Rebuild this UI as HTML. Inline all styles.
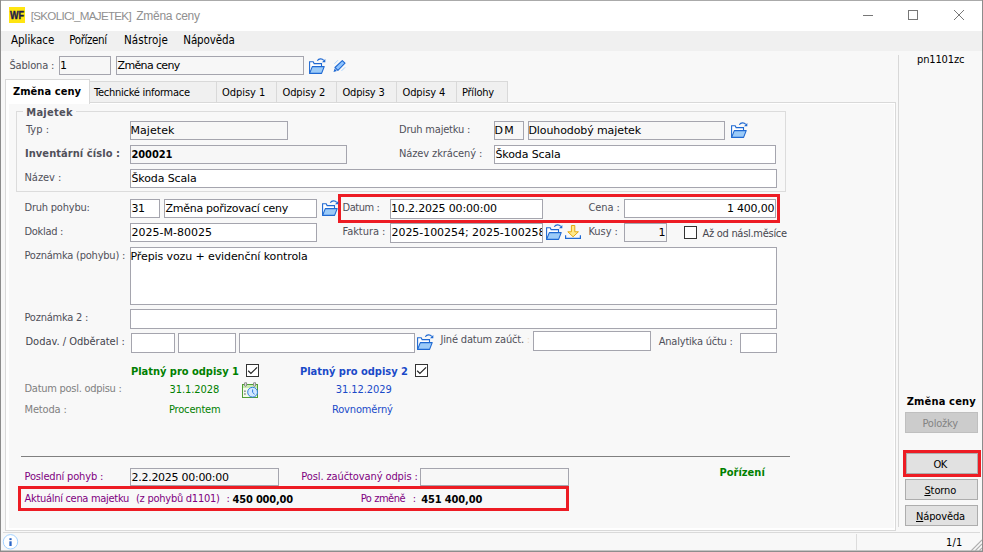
<!DOCTYPE html><html lang="cs"><head><meta charset="utf-8"><title>[SKOLICI_MAJETEK] Změna ceny</title>
<style>html,body{margin:0;padding:0}body{width:983px;height:552px;overflow:hidden;background:#f8f8f8;position:relative}.t{position:absolute;white-space:pre;line-height:20px;height:20px}</style></head><body>
<div style="position:absolute;left:0px;top:0px;width:983px;height:552px;background:#8c8c8c;"></div>
<div style="position:absolute;left:1px;top:1px;width:981px;height:549px;background:#f8f8f8;"></div>
<div style="position:absolute;left:1px;top:550px;width:981px;height:1px;background:#c4c4c4;"></div>
<div style="position:absolute;left:1px;top:0px;width:981px;height:1px;background:#aaaaaa;"></div>
<div style="position:absolute;left:1px;top:1px;width:981px;height:30px;background:#ffffff;"></div>
<div style="position:absolute;left:1px;top:31px;width:981px;height:20px;background:#f0f0f0;"></div>
<div style="position:absolute;left:9px;top:7px;width:16px;height:16px;background:#ffe512"></div>
<span style="position:absolute;left:9.8px;top:5px;line-height:20px;font:bold 10.5px/20px 'Liberation Sans',sans-serif;color:#1c1a4a;transform:scaleX(.86);transform-origin:0 0;-webkit-text-stroke:.4px #1c1a4a">WF</span>
<svg style="position:absolute;left:855px;top:1px" width="126" height="30" viewBox="0 0 126 30" fill="none" stroke="#777" stroke-width="1"><path d="M8 14.5h10"/><rect x="53.5" y="9.5" width="9" height="9"/><path d="M99 9l10 10M109 9l-10 10"/></svg>
<div style="position:absolute;left:59px;top:56px;width:50px;height:17px;background:#f7f7f7;border:1px solid #a5a5ae;"></div>
<div style="position:absolute;left:116px;top:56px;width:186px;height:17px;background:#f7f7f7;border:1px solid #a5a5ae;"></div>
<div style="position:absolute;left:898px;top:55px;width:1px;height:472px;background:#d8d8d8;"></div>
<div style="position:absolute;left:905px;top:412px;width:71px;height:19px;background:#cccccc;border:1px solid #bfbfbf;"></div>
<div style="position:absolute;left:903px;top:450px;width:72px;height:21px;background:transparent;border:3px solid #ed1c24;"></div>
<div style="position:absolute;left:906px;top:453px;width:70px;height:19px;background:#e1e1e1;border:1px solid #adadad;"></div>
<div style="position:absolute;left:905px;top:479px;width:71px;height:19px;background:#e1e1e1;border:1px solid #adadad;"></div>
<div style="position:absolute;left:905px;top:505px;width:71px;height:19px;background:#e1e1e1;border:1px solid #adadad;"></div>
<div style="position:absolute;left:5px;top:102px;width:889px;height:427px;background:#ffffff;border:1px solid #d9d9d9;"></div>
<div style="position:absolute;left:9px;top:104px;width:885px;height:424px;background:#f8f8f8;"></div>
<div style="position:absolute;left:89px;top:81px;width:419px;height:21px;background:#f0f0f0;border-top:1px solid #d9d9d9;box-sizing:border-box"></div>
<div style="position:absolute;left:216px;top:81px;width:1px;height:21px;background:#d9d9d9;"></div>
<div style="position:absolute;left:276px;top:81px;width:1px;height:21px;background:#d9d9d9;"></div>
<div style="position:absolute;left:336px;top:81px;width:1px;height:21px;background:#d9d9d9;"></div>
<div style="position:absolute;left:396px;top:81px;width:1px;height:21px;background:#d9d9d9;"></div>
<div style="position:absolute;left:456px;top:81px;width:1px;height:21px;background:#d9d9d9;"></div>
<div style="position:absolute;left:507px;top:81px;width:1px;height:21px;background:#d9d9d9;"></div>
<div style="position:absolute;left:5px;top:79px;width:83px;height:24px;background:#ffffff;border:1px solid #d9d9d9;border-bottom:none"></div>
<div style="position:absolute;left:16px;top:111px;width:768px;height:79px;background:transparent;border:1px solid #dcdcdc;"></div>
<div style="position:absolute;left:23px;top:105px;width:53px;height:14px;background:#f8f8f8;"></div>
<div style="position:absolute;left:130px;top:121px;width:156px;height:17px;background:#f7f7f7;border:1px solid #a5a5ae;"></div>
<div style="position:absolute;left:494px;top:121px;width:28px;height:17px;background:#f7f7f7;border:1px solid #a5a5ae;"></div>
<div style="position:absolute;left:528px;top:121px;width:195px;height:17px;background:#f7f7f7;border:1px solid #a5a5ae;"></div>
<div style="position:absolute;left:130px;top:145px;width:215px;height:17px;background:#f7f7f7;border:1px solid #a5a5ae;"></div>
<div style="position:absolute;left:494px;top:145px;width:280px;height:17px;background:#fff;border:1px solid #a5a5ae;"></div>
<div style="position:absolute;left:130px;top:169px;width:645px;height:17px;background:#fff;border:1px solid #a5a5ae;"></div>
<div style="position:absolute;left:130px;top:199px;width:28px;height:17px;background:#fff;border:1px solid #a5a5ae;"></div>
<div style="position:absolute;left:164px;top:199px;width:151px;height:17px;background:#fff;border:1px solid #a5a5ae;"></div>
<div style="position:absolute;left:390px;top:199px;width:151px;height:18px;background:#fff;border:1px solid #a5a5ae;"></div>
<div style="position:absolute;left:624px;top:199px;width:150px;height:17px;background:#fff;border:1px solid #a5a5ae;"></div>
<div style="position:absolute;left:338px;top:194px;width:436px;height:23px;background:transparent;border:3px solid #ed1c24;"></div>
<div style="position:absolute;left:130px;top:223px;width:185px;height:17px;background:#fff;border:1px solid #a5a5ae;"></div>
<div style="position:absolute;left:390px;top:223px;width:151px;height:18px;background:#fff;border:1px solid #a5a5ae;"></div>
<div style="position:absolute;left:624px;top:223px;width:41px;height:17px;background:#f7f7f7;border:1px solid #a5a5ae;"></div>
<div style="position:absolute;left:684px;top:226px;width:11px;height:11px;background:#fff;border:1px solid #333;"></div>
<div style="position:absolute;left:130px;top:247px;width:645px;height:56px;background:#fff;border:1px solid #a5a5ae;"></div>
<div style="position:absolute;left:130px;top:309px;width:645px;height:18px;background:#fff;border:1px solid #a5a5ae;"></div>
<div style="position:absolute;left:131px;top:333px;width:42px;height:18px;background:#fff;border:1px solid #a5a5ae;"></div>
<div style="position:absolute;left:178px;top:333px;width:56px;height:18px;background:#fff;border:1px solid #a5a5ae;"></div>
<div style="position:absolute;left:239px;top:333px;width:174px;height:18px;background:#fff;border:1px solid #a5a5ae;"></div>
<div style="position:absolute;left:533px;top:331px;width:116px;height:18px;background:#fff;border:1px solid #a5a5ae;"></div>
<div style="position:absolute;left:740px;top:333px;width:35px;height:18px;background:#fff;border:1px solid #a5a5ae;"></div>
<svg style="position:absolute;left:246px;top:364px" width="13" height="13" viewBox="0 0 13 13"><rect x=".5" y=".5" width="12" height="12" fill="#fff" stroke="#333"/><path d="M2.2 6.8l2.7 2.6 6.2-6" fill="none" stroke="#222" stroke-width="1.2"/></svg>
<svg style="position:absolute;left:415px;top:364px" width="13" height="13" viewBox="0 0 13 13"><rect x=".5" y=".5" width="12" height="12" fill="#fff" stroke="#333"/><path d="M2.2 6.8l2.7 2.6 6.2-6" fill="none" stroke="#222" stroke-width="1.2"/></svg>
<div style="position:absolute;left:21px;top:456px;width:769px;height:1px;background:#808080;"></div>
<div style="position:absolute;left:130px;top:468px;width:147px;height:16px;background:#f7f7f7;border:1px solid #a5a5ae;"></div>
<div style="position:absolute;left:420px;top:468px;width:147px;height:16px;background:#f7f7f7;border:1px solid #a5a5ae;"></div>
<div style="position:absolute;left:18px;top:486px;width:545px;height:19px;background:transparent;border:3px solid #ed1c24;"></div>
<div style="position:absolute;left:3px;top:532px;width:977px;height:1px;background:#dadada;"></div>
<div style="position:absolute;left:856px;top:534px;width:1px;height:16px;background:#dcdcdc;"></div>
<svg style="position:absolute;left:2px;top:533px" width="17" height="17" viewBox="0 0 17 17"><circle cx="8.5" cy="8.8" r="7.2" fill="#fff" stroke="#a3d2ff" stroke-width="1"/><path d="M8.5 8.3v4.7" stroke="#2a66c8" stroke-width="2.3"/><rect x="7.4" y="5.2" width="2.2" height="1.9" fill="#2a66c8"/></svg>
<svg style="position:absolute;left:969px;top:538px" width="13" height="13" viewBox="0 0 13 13" stroke="#b0b0b0" stroke-width="1.2"><path d="M13 2L2 13M13 6L6 13M13 10l-3 3"/></svg>
<svg style="position:absolute;left:309px;top:58px" width="17" height="16" viewBox="0 0 17 16"><path d="M0.6 15.4V3.7h3.6l0.9 1.9h7.4v2.9" fill="#fff" stroke="#1f69d2" stroke-width="1.1"/><path d="M0.6 15.4L3.3 8.6h11.9l-2.6 6.8z" fill="#9ccbf8" stroke="#1f69d2" stroke-width="1.1" stroke-linejoin="round"/><path d="M8.3 2.7C9.8 0.4 13 0.2 14.8 2.3" fill="none" stroke="#1f69d2" stroke-width="1.1"/><path d="M16.3 0.9v3.4h-3.3z" fill="#1f69d2"/></svg>
<svg style="position:absolute;left:731px;top:122px" width="17" height="16" viewBox="0 0 17 16"><path d="M0.6 15.4V3.7h3.6l0.9 1.9h7.4v2.9" fill="#fff" stroke="#1f69d2" stroke-width="1.1"/><path d="M0.6 15.4L3.3 8.6h11.9l-2.6 6.8z" fill="#9ccbf8" stroke="#1f69d2" stroke-width="1.1" stroke-linejoin="round"/><path d="M8.3 2.7C9.8 0.4 13 0.2 14.8 2.3" fill="none" stroke="#1f69d2" stroke-width="1.1"/><path d="M16.3 0.9v3.4h-3.3z" fill="#1f69d2"/></svg>
<svg style="position:absolute;left:322px;top:200px" width="17" height="16" viewBox="0 0 17 16"><path d="M0.6 15.4V3.7h3.6l0.9 1.9h7.4v2.9" fill="#fff" stroke="#1f69d2" stroke-width="1.1"/><path d="M0.6 15.4L3.3 8.6h11.9l-2.6 6.8z" fill="#9ccbf8" stroke="#1f69d2" stroke-width="1.1" stroke-linejoin="round"/><path d="M8.3 2.7C9.8 0.4 13 0.2 14.8 2.3" fill="none" stroke="#1f69d2" stroke-width="1.1"/><path d="M16.3 0.9v3.4h-3.3z" fill="#1f69d2"/></svg>
<svg style="position:absolute;left:546px;top:224px" width="17" height="16" viewBox="0 0 17 16"><path d="M0.6 15.4V3.7h3.6l0.9 1.9h7.4v2.9" fill="#fff" stroke="#1f69d2" stroke-width="1.1"/><path d="M0.6 15.4L3.3 8.6h11.9l-2.6 6.8z" fill="#9ccbf8" stroke="#1f69d2" stroke-width="1.1" stroke-linejoin="round"/><path d="M8.3 2.7C9.8 0.4 13 0.2 14.8 2.3" fill="none" stroke="#1f69d2" stroke-width="1.1"/><path d="M16.3 0.9v3.4h-3.3z" fill="#1f69d2"/></svg>
<svg style="position:absolute;left:417px;top:334px" width="17" height="16" viewBox="0 0 17 16"><path d="M0.6 15.4V3.7h3.6l0.9 1.9h7.4v2.9" fill="#fff" stroke="#1f69d2" stroke-width="1.1"/><path d="M0.6 15.4L3.3 8.6h11.9l-2.6 6.8z" fill="#9ccbf8" stroke="#1f69d2" stroke-width="1.1" stroke-linejoin="round"/><path d="M8.3 2.7C9.8 0.4 13 0.2 14.8 2.3" fill="none" stroke="#1f69d2" stroke-width="1.1"/><path d="M16.3 0.9v3.4h-3.3z" fill="#1f69d2"/></svg>
<svg style="position:absolute;left:333px;top:60px" width="13" height="13" viewBox="0 0 13 13"><path d="M9.3 0.6L12 3.2 4.9 10.3 2 7.5z" fill="#8fc4ff" stroke="#1f69d2" stroke-width="1.1" stroke-linejoin="round"/><path d="M1.6 8.6l2.3 2.3-3.4 1.2z" fill="#1f69d2"/><path d="M1.4 3.8L5 0.2M8.5 10.9l3.6-3.6" stroke="#9fd0ff" stroke-width="0.9" fill="none"/></svg>
<svg style="position:absolute;left:565px;top:225px" width="16" height="15" viewBox="0 0 16 15"><path d="M6.4 0.5h3.4v6.3h3.6L8.1 11.8 2.8 6.8h3.6z" fill="#ffe98a" stroke="#e3aa10" stroke-width="1" stroke-linejoin="round"/><path d="M0.6 10.2v3.2h14.8v-3.2" fill="none" stroke="#1f69d2" stroke-width="1.2"/></svg>
<svg style="position:absolute;left:242px;top:382px" width="17" height="17" viewBox="0 0 17 17"><rect x="0.5" y="2.5" width="15" height="13" fill="#f2fbea" stroke="#4f9e35"/><rect x="1" y="3" width="14" height="3" fill="#c9ebb2"/><rect x="2" y="8.4" width="1.8" height="1.6" fill="#999"/><rect x="2" y="11.2" width="1.8" height="1.6" fill="#999"/><ellipse cx="3.6" cy="2.3" rx="1.1" ry="2.2" fill="#ddd" stroke="#808080" stroke-width="0.9"/><ellipse cx="12.6" cy="2.3" rx="1.1" ry="2.2" fill="#ddd" stroke="#808080" stroke-width="0.9"/><circle cx="10.6" cy="10.2" r="4.9" fill="#d2e8ff" stroke="#2f7de1" stroke-width="1"/><path d="M10.6 7.4v3l2 1.9" fill="none" stroke="#2f7de1" stroke-width="1"/></svg>
<span class="t" style="left:30.80px;top:9.00px;font:normal 11.6px 'Liberation Sans',sans-serif;color:#909090;letter-spacing:-0.705px;">[SKOLICI_MAJETEK]</span>
<span class="t" style="left:136.20px;top:9.00px;font:normal 12px 'Liberation Sans',sans-serif;color:#909090;letter-spacing:-0.248px;">Změna ceny</span>
<span class="t" style="left:11.00px;top:33.00px;font:normal 11.5px 'DejaVu Sans Condensed','Liberation Sans',sans-serif;color:#000;letter-spacing:-0.03px;">Aplikace</span>
<span class="t" style="left:69.25px;top:33.00px;font:normal 11.5px 'DejaVu Sans Condensed','Liberation Sans',sans-serif;color:#000;letter-spacing:-0.377px;">Pořízení</span>
<span class="t" style="left:124.00px;top:33.00px;font:normal 11.5px 'DejaVu Sans Condensed','Liberation Sans',sans-serif;color:#000;letter-spacing:0.111px;">Nástroje</span>
<span class="t" style="left:183.25px;top:33.00px;font:normal 11.5px 'DejaVu Sans Condensed','Liberation Sans',sans-serif;color:#000;letter-spacing:-0.112px;">Nápověda</span>
<span class="t" style="left:9.50px;top:59.00px;font:normal 11px 'DejaVu Sans Condensed','Liberation Sans',sans-serif;color:#50505a;letter-spacing:-0.177px;">Šablona :</span>
<span class="t" style="left:60.00px;top:59.00px;font:normal 11px 'DejaVu Sans','Liberation Sans',sans-serif;color:#000;">1</span>
<span class="t" style="left:117.50px;top:59.00px;font:normal 11px 'DejaVu Sans','Liberation Sans',sans-serif;color:#000;letter-spacing:-0.641px;">Změna ceny</span>
<span class="t" style="left:917.00px;top:53.00px;font:normal 11px 'DejaVu Sans Condensed','Liberation Sans',sans-serif;color:#000;letter-spacing:-0.133px;">pn1101zc</span>
<span class="t" style="left:906.70px;top:395.00px;font:bold 11px 'DejaVu Sans Condensed','Liberation Sans',sans-serif;color:#000;letter-spacing:0.178px;">Změna ceny</span>
<span class="t" style="left:922.40px;top:417.00px;font:normal 11px 'DejaVu Sans Condensed','Liberation Sans',sans-serif;color:#838383;letter-spacing:-0.194px;">Položky</span>
<span class="t" style="left:933.60px;top:458.00px;font:normal 11px 'DejaVu Sans Condensed','Liberation Sans',sans-serif;color:#000;letter-spacing:-0.588px;">OK</span>
<span class="t" style="left:924.40px;top:484.00px;font:normal 11px 'DejaVu Sans Condensed','Liberation Sans',sans-serif;color:#000;letter-spacing:-0.092px;"><u>S</u>torno</span>
<span class="t" style="left:916.00px;top:510.00px;font:normal 11px 'DejaVu Sans Condensed','Liberation Sans',sans-serif;color:#000;letter-spacing:-0.147px;"><u>N</u>ápověda</span>
<span class="t" style="left:13.00px;top:84.50px;font:bold 11px 'DejaVu Sans Condensed','Liberation Sans',sans-serif;color:#000;letter-spacing:0.056px;">Změna ceny</span>
<span class="t" style="left:94.00px;top:86.00px;font:normal 11px 'DejaVu Sans Condensed','Liberation Sans',sans-serif;color:#000;letter-spacing:-0.255px;">Technické informace</span>
<span class="t" style="left:222.00px;top:86.00px;font:normal 11px 'DejaVu Sans Condensed','Liberation Sans',sans-serif;color:#000;letter-spacing:-0.037px;">Odpisy 1</span>
<span class="t" style="left:282.50px;top:86.00px;font:normal 11px 'DejaVu Sans Condensed','Liberation Sans',sans-serif;color:#000;letter-spacing:-0.108px;">Odpisy 2</span>
<span class="t" style="left:342.50px;top:86.00px;font:normal 11px 'DejaVu Sans Condensed','Liberation Sans',sans-serif;color:#000;letter-spacing:-0.18px;">Odpisy 3</span>
<span class="t" style="left:402.50px;top:86.00px;font:normal 11px 'DejaVu Sans Condensed','Liberation Sans',sans-serif;color:#000;letter-spacing:-0.108px;">Odpisy 4</span>
<span class="t" style="left:462.00px;top:86.00px;font:normal 11px 'DejaVu Sans Condensed','Liberation Sans',sans-serif;color:#000;letter-spacing:-0.236px;">Přílohy</span>
<span class="t" style="left:26.25px;top:106.00px;font:bold 11px 'DejaVu Sans Condensed','Liberation Sans',sans-serif;color:#50505a;letter-spacing:0.279px;">Majetek</span>
<span class="t" style="left:26.00px;top:123.00px;font:normal 11px 'DejaVu Sans Condensed','Liberation Sans',sans-serif;color:#50505a;letter-spacing:0.035px;">Typ :</span>
<span class="t" style="left:130.50px;top:124.00px;font:normal 11px 'DejaVu Sans','Liberation Sans',sans-serif;color:#000;letter-spacing:0.061px;">Majetek</span>
<span class="t" style="left:399.00px;top:123.00px;font:normal 11px 'DejaVu Sans Condensed','Liberation Sans',sans-serif;color:#50505a;letter-spacing:-0.201px;">Druh majetku :</span>
<span class="t" style="left:494.50px;top:124.00px;font:normal 11px 'DejaVu Sans','Liberation Sans',sans-serif;color:#000;letter-spacing:1.28px;">DM</span>
<span class="t" style="left:528.50px;top:124.00px;font:normal 11px 'DejaVu Sans','Liberation Sans',sans-serif;color:#000;letter-spacing:-0.102px;">Dlouhodobý majetek</span>
<span class="t" style="left:25.00px;top:147.00px;font:bold 11px 'DejaVu Sans Condensed','Liberation Sans',sans-serif;color:#50505a;letter-spacing:0.066px;">Inventární číslo :</span>
<span class="t" style="left:131.50px;top:148.00px;font:bold 11px 'DejaVu Sans Condensed','Liberation Sans',sans-serif;color:#000;letter-spacing:-0.086px;">200021</span>
<span class="t" style="left:399.00px;top:147.00px;font:normal 11px 'DejaVu Sans Condensed','Liberation Sans',sans-serif;color:#50505a;letter-spacing:-0.107px;">Název zkrácený :</span>
<span class="t" style="left:495.50px;top:148.00px;font:normal 11px 'DejaVu Sans','Liberation Sans',sans-serif;color:#000;letter-spacing:-0.124px;">Škoda Scala</span>
<span class="t" style="left:24.50px;top:171.00px;font:normal 11px 'DejaVu Sans Condensed','Liberation Sans',sans-serif;color:#50505a;letter-spacing:-0.041px;">Název :</span>
<span class="t" style="left:131.50px;top:172.00px;font:normal 11px 'DejaVu Sans','Liberation Sans',sans-serif;color:#000;letter-spacing:-0.124px;">Škoda Scala</span>
<span class="t" style="left:24.50px;top:201.00px;font:normal 11px 'DejaVu Sans Condensed','Liberation Sans',sans-serif;color:#50505a;letter-spacing:-0.218px;">Druh pohybu:</span>
<span class="t" style="left:131.50px;top:202.00px;font:normal 11px 'DejaVu Sans','Liberation Sans',sans-serif;color:#000;letter-spacing:-0.499px;">31</span>
<span class="t" style="left:165.50px;top:202.00px;font:normal 11px 'DejaVu Sans','Liberation Sans',sans-serif;color:#000;letter-spacing:-0.271px;">Změna pořizovací ceny</span>
<span class="t" style="left:342.50px;top:201.00px;font:normal 11px 'DejaVu Sans Condensed','Liberation Sans',sans-serif;color:#50505a;letter-spacing:-0.437px;">Datum :</span>
<span class="t" style="left:391.00px;top:202.00px;font:normal 11px 'DejaVu Sans','Liberation Sans',sans-serif;color:#000;letter-spacing:-0.17px;">10.2.2025 00:00:00</span>
<span class="t" style="left:588.50px;top:201.00px;font:normal 11px 'DejaVu Sans Condensed','Liberation Sans',sans-serif;color:#50505a;letter-spacing:-0.097px;">Cena :</span>
<span class="t" style="left:727.00px;top:202.00px;font:normal 11px 'DejaVu Sans','Liberation Sans',sans-serif;color:#000;letter-spacing:-0.227px;">1 400,00</span>
<span class="t" style="left:24.50px;top:225.00px;font:normal 11px 'DejaVu Sans Condensed','Liberation Sans',sans-serif;color:#50505a;letter-spacing:-0.307px;">Doklad :</span>
<span class="t" style="left:131.50px;top:226.00px;font:normal 11px 'DejaVu Sans','Liberation Sans',sans-serif;color:#000;letter-spacing:0.008px;">2025-M-80025</span>
<span class="t" style="left:342.50px;top:225.00px;font:normal 11px 'DejaVu Sans Condensed','Liberation Sans',sans-serif;color:#50505a;letter-spacing:-0.05px;">Faktura :</span>
<span class="t" style="left:391.50px;top:226.00px;font:normal 11px 'DejaVu Sans','Liberation Sans',sans-serif;color:#000;letter-spacing:-0.048px;width:150.50px;overflow:hidden;">2025-100254; 2025-100258</span>
<span class="t" style="left:588.50px;top:225.00px;font:normal 11px 'DejaVu Sans Condensed','Liberation Sans',sans-serif;color:#50505a;letter-spacing:-0.073px;">Kusy :</span>
<span class="t" style="left:658.50px;top:226.00px;font:normal 11px 'DejaVu Sans','Liberation Sans',sans-serif;color:#000;">1</span>
<span class="t" style="left:702.50px;top:226.70px;font:normal 11px 'DejaVu Sans Condensed','Liberation Sans',sans-serif;color:#46464e;letter-spacing:-0.284px;">Až od násl.měsíce</span>
<span class="t" style="left:24.50px;top:249.00px;font:normal 11px 'DejaVu Sans Condensed','Liberation Sans',sans-serif;color:#50505a;letter-spacing:-0.219px;">Poznámka (pohybu) :</span>
<span class="t" style="left:130.50px;top:250.00px;font:normal 11px 'DejaVu Sans','Liberation Sans',sans-serif;color:#000;letter-spacing:-0.101px;">Přepis vozu + evidenční kontrola</span>
<span class="t" style="left:24.50px;top:311.00px;font:normal 11px 'DejaVu Sans Condensed','Liberation Sans',sans-serif;color:#50505a;letter-spacing:-0.226px;">Poznámka 2 :</span>
<span class="t" style="left:25.50px;top:335.40px;font:normal 11px 'DejaVu Sans Condensed','Liberation Sans',sans-serif;color:#44444e;letter-spacing:-0.012px;">Dodav. / Odběratel :</span>
<span class="t" style="left:440.50px;top:333.00px;font:normal 11px 'DejaVu Sans Condensed','Liberation Sans',sans-serif;color:#50505a;letter-spacing:-0.175px;">Jiné datum zaúčt.</span>
<span class="t" style="left:526.80px;top:333.00px;font:normal 11px 'DejaVu Sans Condensed','Liberation Sans',sans-serif;color:#eedcc6;">:</span>
<span class="t" style="left:658.75px;top:335.00px;font:normal 11px 'DejaVu Sans Condensed','Liberation Sans',sans-serif;color:#50505a;letter-spacing:-0.216px;">Analytika účtu :</span>
<span class="t" style="left:131.00px;top:365.00px;font:bold 11px 'DejaVu Sans Condensed','Liberation Sans',sans-serif;color:#008000;letter-spacing:-0.019px;">Platný pro odpisy 1</span>
<span class="t" style="left:300.00px;top:365.00px;font:bold 11px 'DejaVu Sans Condensed','Liberation Sans',sans-serif;color:#1a4ac8;letter-spacing:-0.019px;">Platný pro odpisy 2</span>
<span class="t" style="left:24.50px;top:382.00px;font:normal 11px 'DejaVu Sans Condensed','Liberation Sans',sans-serif;color:#808080;letter-spacing:-0.268px;">Datum posl. odpisu :</span>
<span class="t" style="left:169.50px;top:383.00px;font:normal 11px 'DejaVu Sans Condensed','Liberation Sans',sans-serif;color:#008000;letter-spacing:-0.069px;">31.1.2028</span>
<span class="t" style="left:335.75px;top:383.00px;font:normal 11px 'DejaVu Sans Condensed','Liberation Sans',sans-serif;color:#1a4ac8;letter-spacing:-0.067px;">31.12.2029</span>
<span class="t" style="left:24.50px;top:403.00px;font:normal 11px 'DejaVu Sans Condensed','Liberation Sans',sans-serif;color:#808080;letter-spacing:-0.15px;">Metoda :</span>
<span class="t" style="left:169.00px;top:403.00px;font:normal 11px 'DejaVu Sans Condensed','Liberation Sans',sans-serif;color:#008000;letter-spacing:-0.178px;">Procentem</span>
<span class="t" style="left:332.00px;top:403.00px;font:normal 11px 'DejaVu Sans Condensed','Liberation Sans',sans-serif;color:#1a4ac8;letter-spacing:-0.166px;">Rovnoměrný</span>
<span class="t" style="left:24.50px;top:470.00px;font:normal 11px 'DejaVu Sans Condensed','Liberation Sans',sans-serif;color:#800080;letter-spacing:-0.164px;">Poslední pohyb :</span>
<span class="t" style="left:131.50px;top:471.00px;font:normal 11px 'DejaVu Sans','Liberation Sans',sans-serif;color:#000;letter-spacing:-0.274px;">2.2.2025 00:00:00</span>
<span class="t" style="left:301.25px;top:470.00px;font:normal 11px 'DejaVu Sans Condensed','Liberation Sans',sans-serif;color:#800080;letter-spacing:-0.101px;">Posl. zaúčtovaný odpis :</span>
<span class="t" style="left:719.50px;top:466.00px;font:bold 11px 'DejaVu Sans Condensed','Liberation Sans',sans-serif;color:#008000;letter-spacing:0.008px;">Pořízení</span>
<span class="t" style="left:24.50px;top:492.00px;font:normal 11px 'DejaVu Sans Condensed','Liberation Sans',sans-serif;color:#800080;letter-spacing:-0.298px;">Aktuální cena majetku</span>
<span class="t" style="left:136.00px;top:492.00px;font:normal 11px 'DejaVu Sans Condensed','Liberation Sans',sans-serif;color:#800080;letter-spacing:-0.255px;">(z pohybů d1101)</span>
<span class="t" style="left:226.50px;top:492.00px;font:normal 11px 'DejaVu Sans Condensed','Liberation Sans',sans-serif;color:#800080;">:</span>
<span class="t" style="left:232.50px;top:493.00px;font:bold 11px 'DejaVu Sans Condensed','Liberation Sans',sans-serif;color:#000;letter-spacing:-0.178px;">450 000,00</span>
<span class="t" style="left:360.70px;top:492.00px;font:normal 11px 'DejaVu Sans Condensed','Liberation Sans',sans-serif;color:#800080;letter-spacing:-0.439px;">Po změně</span>
<span class="t" style="left:412.70px;top:492.00px;font:normal 11px 'DejaVu Sans Condensed','Liberation Sans',sans-serif;color:#800080;">:</span>
<span class="t" style="left:421.20px;top:493.00px;font:bold 11px 'DejaVu Sans Condensed','Liberation Sans',sans-serif;color:#000;letter-spacing:-0.123px;">451 400,00</span>
<span class="t" style="left:946.00px;top:536.00px;font:normal 11px 'DejaVu Sans Condensed','Liberation Sans',sans-serif;color:#000;letter-spacing:0.185px;">1/1</span>
</body></html>
